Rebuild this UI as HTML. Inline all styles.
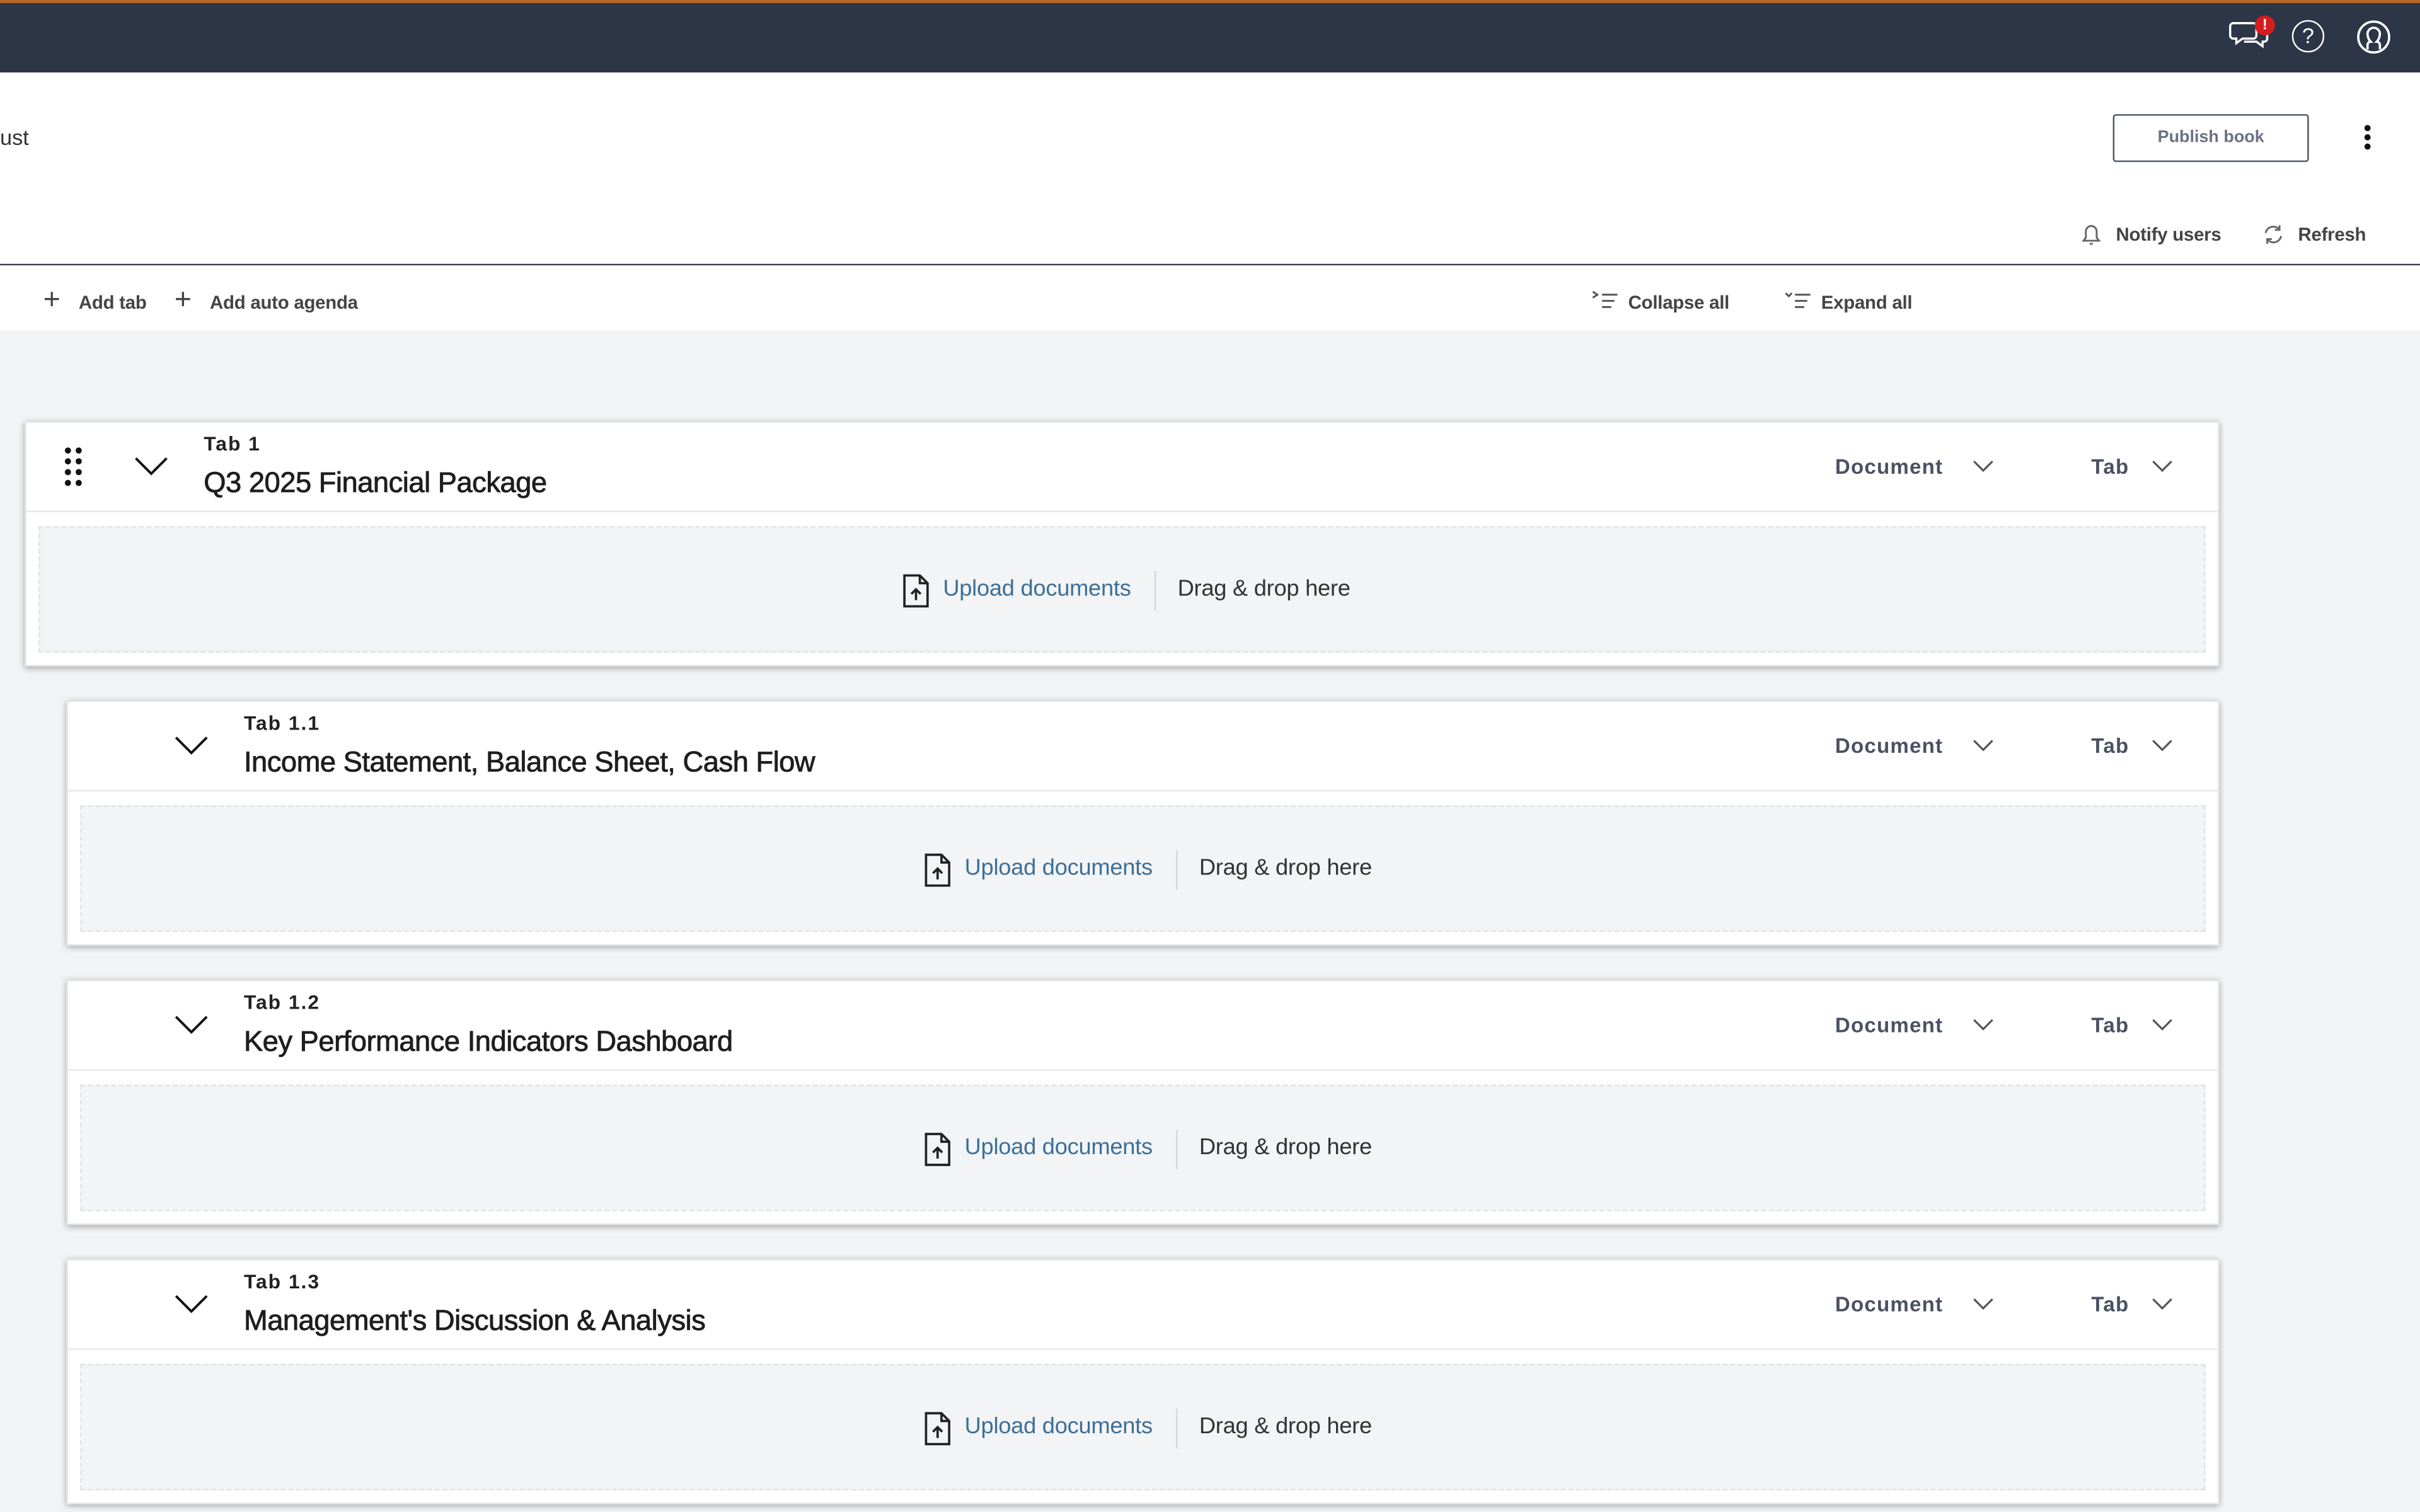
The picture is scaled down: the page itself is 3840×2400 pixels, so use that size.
<!DOCTYPE html>
<html><head><meta charset="utf-8">
<style>
*{margin:0;padding:0;box-sizing:border-box}
html,body{width:3840px;height:2400px;overflow:hidden;background:#f2f3f4}
#w{position:absolute;left:0;top:0;width:1568px;height:980px;transform:scale(2.44898);transform-origin:0 0;font-family:"Liberation Sans",sans-serif;background:#f2f3f4;overflow:hidden}
.a{position:absolute;white-space:nowrap}
.top{left:0;top:0;width:1568px;height:47px;background:#2c3646;border-top:2px solid #b8672a}
.hdr{left:0;top:47px;width:1568px;height:125px;background:#fff;border-bottom:1.5px solid #3a3f47}
.tb{left:0;top:172px;width:1568px;height:42px;background:#fff}
.tl{font-size:12px;font-weight:bold;color:#444;letter-spacing:-.1px}
.card{position:absolute;background:#fff;box-shadow:0 1px 4px rgba(0,0,0,.35);border:1px solid #e2e4e6}
.card .div{position:absolute;left:0;right:0;top:57px;height:1px;background:#e8e9eb}
.drop{position:absolute;left:8px;right:8px;top:67px;height:82px;background:#f3f4f6;border:1px dashed #e0e2e4}
.tabn{font-size:13px;font-weight:bold;color:#222;letter-spacing:.8px}
.ttl{font-size:18.5px;color:#1e1e1e;letter-spacing:-.2px;-webkit-text-stroke:.35px #1e1e1e}
.dd{font-size:13.5px;font-weight:bold;color:#4a5262;letter-spacing:.5px}
.up{font-size:14.8px;color:#3d6f98;letter-spacing:-.1px}
.dr{font-size:14.8px;color:#333;letter-spacing:-.1px}
</style></head><body><div id="w">
<div class="a top"></div>
<svg class="a" style="left:1444px;top:10px" width="30" height="26" viewBox="0 0 30 26" fill="none" stroke="#fff" stroke-width="1.4"><path d="M3 5h13a2 2 0 0 1 2 2v6a2 2 0 0 1-2 2H9l-4 3v-3H3a2 2 0 0 1-2-2V7a2 2 0 0 1 2-2z"/><path d="M10 17h8l4 3v-3h1a2 2 0 0 0 2-2v-5"/></svg>
<div class="a" style="left:1461px;top:10px;width:13px;height:13px;border-radius:50%;background:#d61d1d;color:#fff;font-size:10px;font-weight:bold;text-align:center;line-height:13px">!</div>
<div class="a" style="left:1485px;top:13px;width:21px;height:21px;border:1.5px solid #fff;border-radius:50%;color:#fff;font-size:14px;text-align:center;line-height:18px">?</div>
<svg class="a" style="left:1527px;top:13px" width="22" height="22" viewBox="0 0 22 22" fill="none" stroke="#fff" stroke-width="1.5"><circle cx="11" cy="11" r="10"/><path d="M7 19v-3c0-1 1-2 2-2-1-1-2-3-2-5a4 4 0 0 1 8 0c0 2-1 4-2 5 1 0 2 1 2 2v3"/></svg>
<div class="a hdr"></div>
<div class="a" style="left:0;top:81px;font-size:14px;color:#333">ust</div>
<div class="a" style="left:1369px;top:74px;width:127px;height:31px;border:1.5px solid #4d5563;border-radius:2px;font-size:11px;font-weight:bold;color:#6a7282;text-align:center;line-height:28px">Publish book</div>
<div class="a" style="left:1532px;top:81px;width:4px;height:4px;border-radius:50%;background:#111;box-shadow:0 6px 0 #111,0 12px 0 #111"></div>
<svg class="a" style="left:1348px;top:144px" width="14" height="16" viewBox="0 0 14 16" fill="none" stroke="#666" stroke-width="1.2"><path d="M2 12h10l-1.5-2V6a3.5 3.5 0 0 0-7 0v4z"/><path d="M6 14h2"/></svg>
<div class="a tl" style="left:1371px;top:145px">Notify users</div>
<svg class="a" style="left:1465px;top:144px" width="16" height="16" viewBox="0 0 16 16" fill="none" stroke="#666" stroke-width="1.2"><path d="M3 7a5 5 0 0 1 9-2M13 9a5 5 0 0 1-9 2"/><path d="M12 2v3H9M4 14v-3h3"/></svg>
<div class="a tl" style="left:1489px;top:145px">Refresh</div>
<div class="a tb"></div>
<div class="a" style="left:28px;top:185px;font-size:19px;color:#444;line-height:19px">+</div>
<div class="a tl" style="left:51px;top:189px">Add tab</div>
<div class="a" style="left:113px;top:185px;font-size:19px;color:#444;line-height:19px">+</div>
<div class="a tl" style="left:136px;top:189px">Add auto agenda</div>
<svg class="a" style="left:1031px;top:188px" width="18" height="14" viewBox="0 0 18 14" fill="none" stroke="#555" stroke-width="1.2"><path d="M1 1l3 2-3 2M7 3h10M7 7h8M7 11h6"/></svg>
<div class="a tl" style="left:1055px;top:189px">Collapse all</div>
<svg class="a" style="left:1156px;top:188px" width="18" height="14" viewBox="0 0 18 14" fill="none" stroke="#555" stroke-width="1.2"><path d="M1 2l2 2 2-2M7 3h10M7 7h8M7 11h6"/></svg>
<div class="a tl" style="left:1180px;top:189px">Expand all</div>
<svg class="a" style="left:635px;top:273px" width="12" height="18" viewBox="0 0 12 18"><path d="M1 1v13l3-3 3 6 2-1-3-6h4z" fill="#111" stroke="#fff" stroke-width=".8"/></svg>

<div class="card" style="left:16px;top:273px;width:1422px;height:159px">
 <div class="a" style="left:25px;top:16px;width:4px;height:4px;border-radius:50%;background:#111;box-shadow:7px 0 #111,0 7px #111,7px 7px #111,0 14px #111,7px 14px #111,0 21px #111,7px 21px #111"></div>
 <svg class="a" style="left:70px;top:21px" width="22" height="14" viewBox="0 0 22 14" fill="none" stroke="#111" stroke-width="1.6"><path d="M1 2l10 10 10-10"/></svg>
 <div class="a tabn" style="left:115px;top:6px">Tab 1</div>
 <div class="a ttl" style="left:115px;top:28px">Q3 2025 Financial Package</div>
 <div class="a dd" style="left:1172px;top:21px">Document</div>
 <svg class="a" style="left:1261px;top:24px" width="14" height="9" viewBox="0 0 14 9" fill="none" stroke="#555" stroke-width="1.3"><path d="M1 1l6 6 6-6"/></svg>
 <div class="a dd" style="left:1338px;top:21px">Tab</div>
 <svg class="a" style="left:1377px;top:24px" width="14" height="9" viewBox="0 0 14 9" fill="none" stroke="#555" stroke-width="1.3"><path d="M1 1l6 6 6-6"/></svg>
 <div class="div"></div>
 <div class="drop">
  <svg class="a" style="left:558px;top:30px" width="18" height="22" viewBox="0 0 18 22" fill="none" stroke="#222" stroke-width="1.5"><path d="M2 1h10l5 5v15H2z"/><path d="M12 1v5h5M9.5 17v-7M6.5 13l3-3 3 3"/></svg>
  <div class="a up" style="left:585px;top:32px">Upload documents</div>
  <div class="a" style="left:722px;top:28px;width:1px;height:26px;background:#d5d7da"></div>
  <div class="a dr" style="left:737px;top:32px">Drag &amp; drop here</div>
 </div>
</div>

<div class="card" style="left:43px;top:454px;width:1395px;height:159px">
 <svg class="a" style="left:69px;top:21px" width="22" height="14" viewBox="0 0 22 14" fill="none" stroke="#111" stroke-width="1.6"><path d="M1 2l10 10 10-10"/></svg>
 <div class="a tabn" style="left:114px;top:6px">Tab 1.1</div>
 <div class="a ttl" style="left:114px;top:28px">Income Statement, Balance Sheet, Cash Flow</div>
 <div class="a dd" style="left:1145px;top:21px">Document</div>
 <svg class="a" style="left:1234px;top:24px" width="14" height="9" viewBox="0 0 14 9" fill="none" stroke="#555" stroke-width="1.3"><path d="M1 1l6 6 6-6"/></svg>
 <div class="a dd" style="left:1311px;top:21px">Tab</div>
 <svg class="a" style="left:1350px;top:24px" width="14" height="9" viewBox="0 0 14 9" fill="none" stroke="#555" stroke-width="1.3"><path d="M1 1l6 6 6-6"/></svg>
 <div class="div"></div>
 <div class="drop">
  <svg class="a" style="left:545px;top:30px" width="18" height="22" viewBox="0 0 18 22" fill="none" stroke="#222" stroke-width="1.5"><path d="M2 1h10l5 5v15H2z"/><path d="M12 1v5h5M9.5 17v-7M6.5 13l3-3 3 3"/></svg>
  <div class="a up" style="left:572px;top:32px">Upload documents</div>
  <div class="a" style="left:709px;top:28px;width:1px;height:26px;background:#d5d7da"></div>
  <div class="a dr" style="left:724px;top:32px">Drag &amp; drop here</div>
 </div>
</div>

<div class="card" style="left:43px;top:635px;width:1395px;height:159px">
 <svg class="a" style="left:69px;top:21px" width="22" height="14" viewBox="0 0 22 14" fill="none" stroke="#111" stroke-width="1.6"><path d="M1 2l10 10 10-10"/></svg>
 <div class="a tabn" style="left:114px;top:6px">Tab 1.2</div>
 <div class="a ttl" style="left:114px;top:28px">Key Performance Indicators Dashboard</div>
 <div class="a dd" style="left:1145px;top:21px">Document</div>
 <svg class="a" style="left:1234px;top:24px" width="14" height="9" viewBox="0 0 14 9" fill="none" stroke="#555" stroke-width="1.3"><path d="M1 1l6 6 6-6"/></svg>
 <div class="a dd" style="left:1311px;top:21px">Tab</div>
 <svg class="a" style="left:1350px;top:24px" width="14" height="9" viewBox="0 0 14 9" fill="none" stroke="#555" stroke-width="1.3"><path d="M1 1l6 6 6-6"/></svg>
 <div class="div"></div>
 <div class="drop">
  <svg class="a" style="left:545px;top:30px" width="18" height="22" viewBox="0 0 18 22" fill="none" stroke="#222" stroke-width="1.5"><path d="M2 1h10l5 5v15H2z"/><path d="M12 1v5h5M9.5 17v-7M6.5 13l3-3 3 3"/></svg>
  <div class="a up" style="left:572px;top:32px">Upload documents</div>
  <div class="a" style="left:709px;top:28px;width:1px;height:26px;background:#d5d7da"></div>
  <div class="a dr" style="left:724px;top:32px">Drag &amp; drop here</div>
 </div>
</div>

<div class="card" style="left:43px;top:816px;width:1395px;height:159px">
 <svg class="a" style="left:69px;top:21px" width="22" height="14" viewBox="0 0 22 14" fill="none" stroke="#111" stroke-width="1.6"><path d="M1 2l10 10 10-10"/></svg>
 <div class="a tabn" style="left:114px;top:6px">Tab 1.3</div>
 <div class="a ttl" style="left:114px;top:28px">Management's Discussion &amp; Analysis</div>
 <div class="a dd" style="left:1145px;top:21px">Document</div>
 <svg class="a" style="left:1234px;top:24px" width="14" height="9" viewBox="0 0 14 9" fill="none" stroke="#555" stroke-width="1.3"><path d="M1 1l6 6 6-6"/></svg>
 <div class="a dd" style="left:1311px;top:21px">Tab</div>
 <svg class="a" style="left:1350px;top:24px" width="14" height="9" viewBox="0 0 14 9" fill="none" stroke="#555" stroke-width="1.3"><path d="M1 1l6 6 6-6"/></svg>
 <div class="div"></div>
 <div class="drop">
  <svg class="a" style="left:545px;top:30px" width="18" height="22" viewBox="0 0 18 22" fill="none" stroke="#222" stroke-width="1.5"><path d="M2 1h10l5 5v15H2z"/><path d="M12 1v5h5M9.5 17v-7M6.5 13l3-3 3 3"/></svg>
  <div class="a up" style="left:572px;top:32px">Upload documents</div>
  <div class="a" style="left:709px;top:28px;width:1px;height:26px;background:#d5d7da"></div>
  <div class="a dr" style="left:724px;top:32px">Drag &amp; drop here</div>
 </div>
</div>
</div></body></html>
